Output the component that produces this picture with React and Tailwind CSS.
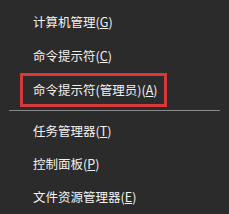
import React from "react";

const font = { fontFamily: '"Microsoft YaHei", "Noto Sans CJK SC", "Noto Sans", sans-serif' };

function Item({ label, k, boxed, h }) {
  return (
    <div
      className={`ml-[20px] flex items-center border-[3px] pl-[10px] ${h} ${
        boxed ? "border-[#d8393b] w-[147px]" : "border-transparent mr-[20px]"
      }`}
    >
      <span className="text-[12.5px] leading-none text-[#f2f2f2] whitespace-nowrap">
        {label}(<u className="underline underline-offset-[1px]">{k}</u>)
      </span>
    </div>
  );
}

export default function App() {
  return (
    <div className="w-[229px] h-[214px] bg-[#2b2b2b] overflow-hidden" style={font}>
      <div className="pt-[5px]">
        <Item label="计算机管理" k="G" h="h-[34px]" />
        <Item label="命令提示符" k="C" h="h-[34px]" />
        <Item label="命令提示符(管理员)" k="A" h="h-[34px]" boxed />
      </div>
      <div className="pt-[3px] pb-[4px] px-[9px]">
        <div className="h-px bg-[#8a8a8a]" />
      </div>
      <div>
        <Item label="任务管理器" k="T" h="h-[33px]" />
        <Item label="控制面板" k="P" h="h-[33px]" />
        <Item label="文件资源管理器" k="E" h="h-[33px]" />
      </div>
    </div>
  );
}
